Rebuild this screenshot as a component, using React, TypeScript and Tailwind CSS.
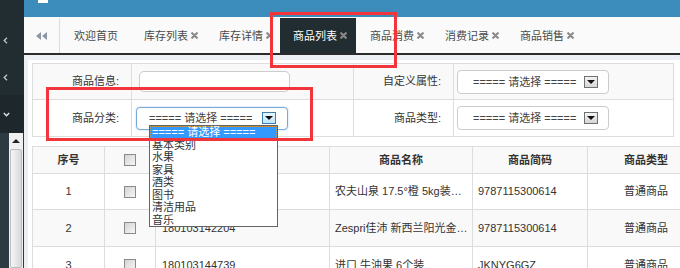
import React from "react";

const categories = ["基本类别", "水果", "家具", "酒类", "图书", "清洁用品", "音乐"];

const tabs = [
  { label: "欢迎首页", closable: false, active: false, pad: "pl-[14px] pr-[13px]" },
  { label: "库存列表", closable: true, active: false, pad: "pl-[13px] pr-[9px]" },
  { label: "库存详情", closable: true, active: false, pad: "pl-[12px] pr-[7px]" },
  { label: "商品列表", closable: true, active: true, pad: "pl-[13px] pr-[9px]" },
  { label: "商品消费", closable: true, active: false, pad: "pl-[14px] pr-[9px]" },
  { label: "消费记录", closable: true, active: false, pad: "pl-[12px] pr-[9px]" },
  { label: "商品销售", closable: true, active: false, pad: "pl-[12px] pr-[9px]" },
];

const rows = [
  { no: "1", code: "180103140018", name: "农夫山泉 17.5°橙 5kg装…", short: "9787115300614", type: "普通商品" },
  { no: "2", code: "180103142204", name: "Zespri佳沛 新西兰阳光金…", short: "9787115300614", type: "普通商品" },
  { no: "3", code: "180103144739", name: "进口 牛油果 6个装", short: "JKNYG6GZ", type: "普通商品" },
];

function AngleLeft() {
  return (
    <svg width="5" height="7" viewBox="0 0 5 7">
      <path d="M4 0.8 L1.2 3.5 L4 6.2" fill="none" stroke="#b8c7ce" strokeWidth="1.3" />
    </svg>
  );
}

function AngleDown() {
  return (
    <svg width="7" height="5" viewBox="0 0 7 5">
      <path d="M0.8 1 L3.5 3.8 L6.2 1" fill="none" stroke="#dfe9f5" strokeWidth="1.3" />
    </svg>
  );
}

function CloseX() {
  return (
    <svg width="7" height="7" viewBox="0 0 7 7">
      <path d="M1.2 1.2 L5.8 5.8 M5.8 1.2 L1.2 5.8" stroke="#8a8a8a" strokeWidth="2.2" strokeLinecap="round" />
    </svg>
  );
}

function Sidebar() {
  return (
    <aside className="flex w-[24px] shrink-0 flex-col bg-[#222d32]">
      <div className="h-[22px]" />
      <div className="flex h-[37px] items-center pl-[3px]">
        <AngleLeft />
      </div>
      <div className="flex h-[36px] items-center pl-[3px]">
        <AngleLeft />
      </div>
      <div className="flex h-[38px] items-center bg-[#1e282c] pl-[3px]">
        <AngleDown />
      </div>
      <div className="flex flex-1 bg-[#2c3b41]">
        <div className="w-[9px]" />
        <div className="flex w-[14px] flex-col bg-[#f0f0f0]">
          <div className="flex h-[16px] items-center justify-center">
            <div className="h-0 w-0 border-x-[4px] border-b-[4px] border-x-transparent border-b-[#222]" />
          </div>
          <div className="mx-[1px] flex-1 rounded-[2px] border border-[#bcbcbc] bg-gradient-to-r from-[#f6f6f6] to-[#d9d9d9]" />
        </div>
      </div>
    </aside>
  );
}

function TabBar() {
  return (
    <div className="flex h-[38px] shrink-0 border-b-2 border-[#2b2b2b] bg-[#fafafa] pt-[1px] text-[#4a4a4a]">
      <div className="flex w-[36px] items-center justify-center border-r border-[#ddd]">
        <svg width="11" height="8" viewBox="0 0 11 8">
          <polygon points="5,0 0,4 5,8" fill="#8d96a0" />
          <polygon points="11,0 6,4 11,8" fill="#8d96a0" />
        </svg>
      </div>
      {tabs.map((tab) => (
        <div
          key={tab.label}
          className={`flex items-center gap-[3px] ${tab.pad} ${tab.active ? "bg-[#222d32] text-white" : ""}`}
        >
          <span className="leading-[12px]">{tab.label}</span>
          {tab.closable ? <CloseX /> : null}
        </div>
      ))}
    </div>
  );
}

function ArrowButton({ focused }: { focused?: boolean }) {
  return (
    <div
      className={`flex h-[12px] w-[14px] items-center justify-center border ${
        focused
          ? "border-[#3c7fb1] bg-gradient-to-b from-[#eaf6fd] to-[#bee6fd]"
          : "border-[#707070] bg-gradient-to-b from-[#f4f4f4] to-[#d6d6d6]"
      }`}
    >
      <div className="h-0 w-0 border-x-[4px] border-t-[4px] border-x-transparent border-t-[#111]" />
    </div>
  );
}

function SelectBox({ focused }: { focused?: boolean }) {
  return (
    <div
      className={`flex w-[152px] items-center justify-between rounded-[4px] border bg-white ${
        focused
          ? "h-[23px] border-[#7aa9d6] pl-[12px] pr-[11px] shadow-[0_0_2px_rgba(102,175,233,0.6)]"
          : "h-[24px] border-[#ccc] pl-[15px] pr-[10px]"
      }`}
    >
      <span className="leading-[12px] text-[#444]">===== 请选择 =====</span>
      <ArrowButton focused={focused} />
    </div>
  );
}

function FilterForm() {
  const cell = "flex items-center border-b border-r border-[#ddd]";
  return (
    <div className="grid w-[642px] grid-cols-[99px_222px_100px_220px] border-l border-t border-[#ddd]">
      <div className={`${cell} h-[36px] justify-end bg-[#f9f9f9] pr-[12px]`}>商品信息:</div>
      <div className={`${cell} bg-[#f9f9f9] pl-[7px]`}>
        <div className="h-[21px] w-[151px] rounded-[5px] border border-[#ccc] bg-white" />
      </div>
      <div className={`${cell} justify-end bg-[#f9f9f9] pr-[12px]`}>自定义属性:</div>
      <div className={`${cell} bg-[#f9f9f9] pl-[3px]`}>
        <SelectBox />
      </div>

      <div className={`${cell} h-[37px] justify-end pr-[12px]`}>商品分类:</div>
      <div className={`${cell} pl-[4px]`}>
        <SelectBox focused />
      </div>
      <div className={`${cell} justify-end pr-[12px]`}>商品类型:</div>
      <div className={`${cell} pl-[3px]`}>
        <SelectBox />
      </div>
    </div>
  );
}

function Checkbox() {
  return <div className="h-[12px] w-[12px] border border-[#8a8a8a] bg-gradient-to-br from-[#d4d4d4] to-[#f6f6f6]" />;
}

function GoodsTable() {
  const cell = "flex items-center border-b border-r border-[#ddd]";
  return (
    <div className="mt-[9px] grid w-[673px] grid-cols-[72px_51px_174px_143px_115px_117px] border-l border-t border-[#ddd]">
      <div className={`${cell} h-[27px] justify-center bg-[#f9f9f9] font-bold`}>序号</div>
      <div className={`${cell} justify-center bg-[#f9f9f9]`}>
        <Checkbox />
      </div>
      <div className={`${cell} justify-center bg-[#f9f9f9] font-bold`}>商品编号</div>
      <div className={`${cell} justify-center bg-[#f9f9f9] font-bold`}>商品名称</div>
      <div className={`${cell} justify-center bg-[#f9f9f9] font-bold`}>商品简码</div>
      <div className={`${cell} justify-center bg-[#f9f9f9] font-bold`}>商品类型</div>

      {rows.map((row, i) => {
        const bg = i % 2 === 1 ? "bg-[#f9f9f9]" : "bg-white";
        const h = i === 0 ? "h-[36px]" : "h-[37px]";
        return (
          <React.Fragment key={row.no}>
            <div className={`${cell} ${h} ${bg} justify-center`}>{row.no}</div>
            <div className={`${cell} ${bg} justify-center`}>
              <Checkbox />
            </div>
            <div className={`${cell} ${bg} pl-[6px]`}>{row.code}</div>
            <div className={`${cell} ${bg} whitespace-nowrap pl-[5px]`}>{row.name}</div>
            <div className={`${cell} ${bg} pl-[5px]`}>{row.short}</div>
            <div className={`${cell} ${bg} justify-center`}>{row.type}</div>
          </React.Fragment>
        );
      })}
    </div>
  );
}

function CategoryList() {
  return (
    <div className="absolute left-[149px] top-[125px] w-[129px] border border-[#646464] bg-white text-[#333]">
      <div className="h-[12.5px] border border-dotted border-[#d39a3c] bg-[#3399ff] pl-[1px] leading-[10.5px] text-white">
        ===== 请选择 =====
      </div>
      {categories.map((c) => (
        <div key={c} className="h-[12.5px] pl-[2px] leading-[12.5px]">
          {c}
        </div>
      ))}
    </div>
  );
}

export default function App() {
  return (
    <div className="relative flex h-[268px] w-[680px] overflow-hidden bg-[#ecf0f5] font-['Liberation_Sans','Noto_Sans_CJK_SC',sans-serif] text-[11px] text-[#333]">
      <Sidebar />
      <div className="flex min-w-0 flex-1 flex-col">
        <header className="h-[17px] shrink-0 bg-[#3c8dbc]">
          <div className="ml-[14px] h-[3px] w-[10px] bg-white" />
        </header>
        <TabBar />
        <main className="min-h-0 flex-1 overflow-hidden pl-[4px] pt-[5px]">
          <div className="h-full bg-white pl-[4px] pt-[3px]">
            <FilterForm />
            <GoodsTable />
          </div>
        </main>
      </div>

      <CategoryList />

      <div className="absolute left-[270px] top-[12px] h-[56px] w-[127px] border-[3px] border-[#f2353a]" />
      <div className="absolute left-[46px] top-[87px] h-[54px] w-[267px] border-[3px] border-[#f2353a]" />
    </div>
  );
}
